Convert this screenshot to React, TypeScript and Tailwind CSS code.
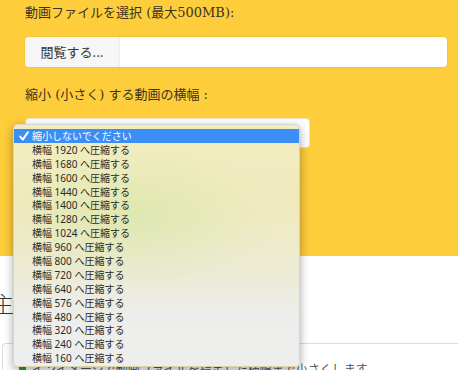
const sizes = [1920, 1680, 1600, 1440, 1400, 1280, 1024, 960, 800, 720, 640, 576, 480, 320, 240, 160];

const labelFont = "font-['DejaVu_Serif','Noto_Sans_CJK_JP',serif]";

const App = () => {
  return (
    <div className="relative w-[458px] h-[370px] overflow-hidden bg-white font-['Noto_Sans','Noto_Sans_CJK_JP',sans-serif]">
      {/* yellow form area */}
      <div className="bg-[#fecd3b] h-[256px] px-[25px] pt-[3px]">
        <div className={`h-5 leading-5 text-[13px] text-[#3b3322] ${labelFont}`}>
          動画ファイルを選択 (最大500MB):
        </div>
        <div className="mt-[14px] h-[30px] w-[422px] flex rounded-[4px] bg-white overflow-hidden shadow-[0_0_0_1px_rgba(0,0,0,0.04)]">
          <div className="w-[95px] bg-[#f6f6f6] border-r border-[#ececec] flex items-center justify-center text-[13px] text-[#333] font-['Noto_Sans_CJK_JP',sans-serif]">
            閲覧する...
          </div>
        </div>
        <div className={`mt-[18px] h-5 leading-5 text-[13px] text-[#3b3322] ${labelFont}`}>
          縮小 (小さく) する動画の横幅 :
        </div>
        <div className="mt-[13px] h-[30px] w-[285px] rounded-[4px] bg-white border border-[#e9e2c6]"></div>
      </div>

      {/* white content area */}
      <div className="pt-[32px]">
        <h2 className="-ml-[8px] h-7 leading-7 text-[22px] font-light text-[#333] font-['Noto_Sans_CJK_JP',sans-serif]">
          主な機能
        </h2>
        <div className="mt-[27px] ml-[2px] border-t border-l border-[#dddddd] rounded-tl-[4px] pl-[16px] pt-[16px] flex items-center gap-[6px]">
          <span className="w-[7px] h-[9px] bg-[#2e9a3c] rounded-[1px]"></span>
          <span className="text-[12px] leading-[18px] text-[#555] font-['Noto_Sans_CJK_JP',sans-serif] whitespace-nowrap">
            インイメージで動画ファイルを指定した横幅まで小さくします
          </span>
        </div>
      </div>

      {/* open select popup */}
      <div className="absolute left-[13px] top-[124px] w-[287px] h-[243px] rounded-[5px] border border-black/10 shadow-[0_3px_10px_rgba(0,0,0,0.35)] pt-[4px] bg-[radial-gradient(ellipse_48%_30%_at_42%_38%,rgba(205,228,160,0.5),transparent),linear-gradient(to_bottom,#f2edbf_0%,#f0ebbf_35%,#ecebd6_62%,#ededeb_80%,#eeeeee_100%)] text-[10px] text-[#2a2a24] font-['Noto_Sans','Noto_Sans_CJK_JP',sans-serif]">
        <div className="h-[13.9px] bg-[#3b8ef5] text-white flex items-center">
          <span className="w-[18px] pl-[5px] flex items-center">
            <svg width="10" height="10" viewBox="0 0 10 10" fill="none" stroke="white" strokeWidth="2" strokeLinecap="round" strokeLinejoin="round">
              <polyline points="1.2,5.6 3.8,8.6 8.8,1.2" />
            </svg>
          </span>
          <span className="leading-none">縮小しないでください</span>
        </div>
        {sizes.map((s) => (
          <div key={s} className="h-[13.9px] flex items-center pl-[18px] leading-none">
            横幅 {s} へ圧縮する
          </div>
        ))}
      </div>
    </div>
  );
};

export default App;
